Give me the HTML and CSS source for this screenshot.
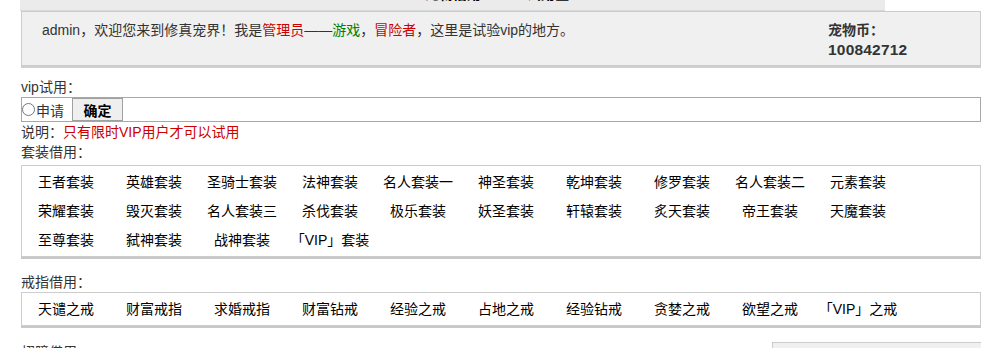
FILE: index.html
```html
<!DOCTYPE html>
<html lang="zh-CN">

<head>
  <meta charset="UTF-8">
  <meta name="viewport" content="width=device-width, initial-scale=1.0">
  <title>修真宠界 - vip试用</title>
  <link rel="stylesheet" href="styles.css">
</head>

<body>
  <div class="top-bar">
    <div class="top-title"><b>宠物借用</b><b>试用区</b></div>
  </div>
  <section class="wrap">
    <div class="welcome">
      <p class="welcome-text">admin，欢迎您来到修真宠界！我是<span class="red">管理员</span>——<span class="green">游戏</span>，<span class="red">冒险者</span>，这里是试验vip的地方。</p>
      <div class="coin">
        <b>宠物币：</b>
        <b class="coin-num">100842712</b>
      </div>
    </div>

    <p class="label">vip试用：</p>
    <form class="vip-form">
      <label><input type="radio" name="vip" value="1">申请</label>
      <input type="submit" value="确定">
    </form>
    <p class="label">说明：<span class="red">只有限时VIP用户才可以试用</span></p>

    <p class="label">套装借用：</p>
    <ul class="item-list">
      <li>王者套装</li>
      <li>英雄套装</li>
      <li>圣骑士套装</li>
      <li>法神套装</li>
      <li>名人套装一</li>
      <li>神圣套装</li>
      <li>乾坤套装</li>
      <li>修罗套装</li>
      <li>名人套装二</li>
      <li>元素套装</li>
      <li>荣耀套装</li>
      <li>毁灭套装</li>
      <li>名人套装三</li>
      <li>杀伐套装</li>
      <li>极乐套装</li>
      <li>妖圣套装</li>
      <li>轩辕套装</li>
      <li>炙天套装</li>
      <li>帝王套装</li>
      <li>天魔套装</li>
      <li>至尊套装</li>
      <li>弑神套装</li>
      <li>战神套装</li>
      <li>「VIP」套装</li>
    </ul>

    <p class="label label-gap">戒指借用：</p>
    <ul class="item-list">
      <li>天谴之戒</li>
      <li>财富戒指</li>
      <li>求婚戒指</li>
      <li>财富钻戒</li>
      <li>经验之戒</li>
      <li>占地之戒</li>
      <li>经验钻戒</li>
      <li>贪婪之戒</li>
      <li>欲望之戒</li>
      <li>「VIP」之戒</li>
    </ul>

    <div class="wing-row">
      <p class="label">翅膀借用：</p>
      <div class="side-box"></div>
    </div>
  </section>
</body>

</html>
```

FILE: styles.css
```css
html {
  box-sizing: border-box;
  font-family: "Liberation Sans", "Noto Sans CJK SC", sans-serif;
  font-size: 14px;
  color: #333;
}

*,
*::before,
*::after {
  box-sizing: border-box;
}

body {
  margin: 0;
  overflow: hidden;
}

p {
  margin: 0;
}

.red {
  color: #cc0000;
}

.green {
  color: #008000;
}

.top-bar {
  width: 865px;
  height: 11px;
  margin-left: 20px;
  background-color: #ebebeb;
  border-bottom: 1px solid #d8d8d8;
  overflow: hidden;
}

.top-title {
  display: flex;
  gap: 46px;
  margin-top: -14px;
  padding-left: 405px;
  line-height: 16px;
  color: #000;
}

.wrap {
  width: 960px;
  margin-left: 21px;
}

.welcome {
  display: flex;
  justify-content: space-between;
  height: 55px;
  padding: 8px 0 0 20px;
  background-color: #f0f0f0;
  border: 1px solid #cccccc;
  box-shadow: 0 2px 0 #cfcfcf;
}

.welcome-text {
  line-height: 20px;
}

.coin {
  display: flex;
  flex-direction: column;
  width: 152px;
  line-height: 20px;
}

.coin-num {
  font-size: 15.5px;
  letter-spacing: 0.2px;
}

.label {
  line-height: 20px;
}

.welcome + .label {
  margin-top: 11px;
}

.vip-form {
  display: flex;
  align-items: center;
  height: 25px;
  border: 1px solid #a8a8a8;
}

.vip-form label {
  display: flex;
  align-items: center;
  width: 50px;
}

.vip-form input[type="radio"] {
  width: 13px;
  height: 13px;
  margin: 0 1px 0 0;
}

.vip-form input[type="submit"] {
  width: 51px;
  height: 23px;
  font-family: inherit;
  font-size: 14px;
  font-weight: bold;
  color: #000;
  background-color: #efefef;
  border: 1px solid #a0a0a0;
  padding: 0;
  cursor: pointer;
}

.item-list {
  display: flex;
  flex-wrap: wrap;
  margin: 3px 0 0;
  padding: 2px 0 1px;
  list-style: none;
  border: 1px solid #cccccc;
  box-shadow: 0 2px 0 #c8c8c8;
  color: #000;
}

.item-list li {
  width: 88px;
  line-height: 29px;
  text-align: center;
  white-space: nowrap;
}

.label-gap {
  margin-top: 15px;
}

.label-gap + .item-list {
  margin-top: 0;
}

.wing-row {
  display: flex;
  justify-content: space-between;
  margin-top: 16px;
}

.side-box {
  width: 209px;
  height: 30px;
  background-color: #f0f0f0;
  border: 1px solid #cccccc;
  border-right: 0;
}
```
